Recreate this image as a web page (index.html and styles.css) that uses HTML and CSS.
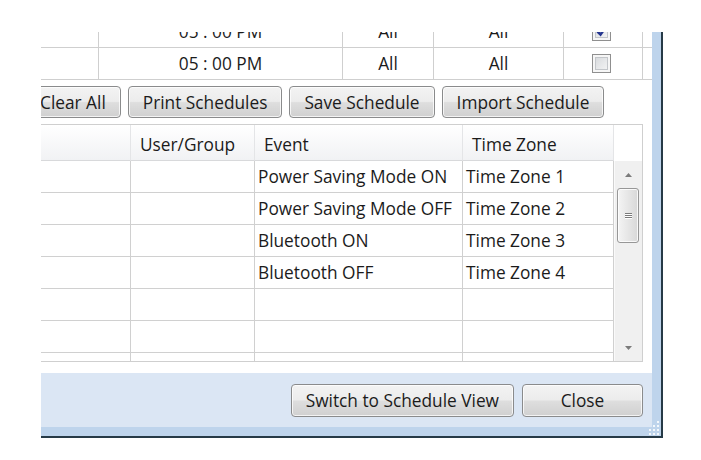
FILE: index.html
```html
<!DOCTYPE html>
<html lang="en">
<head>
    <meta charset="UTF-8">
    <meta name="viewport" content="width=device-width, initial-scale=1.0">
    <title>Schedule List</title>
    <link rel="stylesheet" href="styles.css">
</head>
<body>
    <div class="frame">
        <div class="client">

            <!-- Time slots -->
            <div class="slots">
                <div class="slot-row">
                    <div></div>
                    <div>05 : 00 PM</div>
                    <div>All</div>
                    <div>All</div>
                    <div><span class="check checked">
                        <svg viewBox="0 0 11 11" width="11" height="11"><path d="M1.5 5.5 L4.5 8.5 L9.5 1.5" fill="none" stroke="#24358f" stroke-width="2.6"/></svg>
                    </span></div>
                </div>
                <div class="slot-row">
                    <div></div>
                    <div>05 : 00 PM</div>
                    <div>All</div>
                    <div>All</div>
                    <div><span class="check"></span></div>
                </div>
            </div>

            <div class="toolbar">
                <button class="btn">Clear All</button>
                <button class="btn">Print Schedules</button>
                <button class="btn">Save Schedule</button>
                <button class="btn">Import Schedule</button>
            </div>

            <!-- Schedule grid -->
            <div class="grid">
                <div class="grid-head">
                    <div></div>
                    <div>User/Group</div>
                    <div>Event</div>
                    <div>Time Zone</div>
                    <div class="head-blank"></div>
                </div>
                <div class="grid-body">
                    <div class="rows">
                        <div class="row"><div></div><div></div><div>Power Saving Mode ON</div><div>Time Zone 1</div></div>
                        <div class="row"><div></div><div></div><div>Power Saving Mode OFF</div><div>Time Zone 2</div></div>
                        <div class="row"><div></div><div></div><div>Bluetooth ON</div><div>Time Zone 3</div></div>
                        <div class="row"><div></div><div></div><div>Bluetooth OFF</div><div>Time Zone 4</div></div>
                        <div class="row"><div></div><div></div><div></div><div></div></div>
                        <div class="row"><div></div><div></div><div></div><div></div></div>
                        <div class="row"><div></div><div></div><div></div><div></div></div>
                    </div>
                    <div class="vscroll">
                        <div class="arrow">
                            <svg viewBox="0 0 7 4" width="7" height="4"><path d="M0 4 L3.5 0 L7 4 Z" fill="#7b7b7b"/></svg>
                        </div>
                        <div class="thumb">
                            <span></span><span></span><span></span>
                        </div>
                        <div class="track"></div>
                        <div class="arrow">
                            <svg viewBox="0 0 7 4" width="7" height="4"><path d="M0 0 L7 0 L3.5 4 Z" fill="#7b7b7b"/></svg>
                        </div>
                    </div>
                </div>
            </div>

            <div class="footer">
                <button class="btn btn-tall">Switch to Schedule View</button>
                <button class="btn btn-tall btn-close">Close</button>
            </div>
        </div>

        <!-- size grip -->
        <svg class="grip" viewBox="0 0 14 17" width="14" height="17">
            <g fill="#f4f8fc">
                <rect x="11" y="2" width="2" height="2"/>
                <rect x="11" y="6" width="2" height="2"/>
                <rect x="11" y="10" width="2" height="2"/>
                <rect x="11" y="14" width="2" height="2"/>
                <rect x="7" y="6" width="2" height="2"/>
                <rect x="7" y="10" width="2" height="2"/>
                <rect x="7" y="14" width="2" height="2"/>
                <rect x="3" y="10" width="2" height="2"/>
                <rect x="3" y="14" width="2" height="2"/>
            </g>
        </svg>
    </div>
</body>
</html>
```

FILE: styles.css
```css
/* General Styles */
* {
    box-sizing: border-box;
}

body {
    margin: 0;
    background: #fff;
    font-family: "Open Sans", "Noto Sans", sans-serif;
    font-size: 17.3px;
    color: #1b1b1b;
}

/* Window frame */
.frame {
    position: relative;
    width: 622px;
    height: 406px;
    margin: 32px 0 0 41px;
    padding: 0 9px 9px 0;
    background: #bed4ec;
    border-right: 2px solid #263a47;
    border-bottom: 2px solid #263a47;
}

.client {
    height: 100%;
    background: #fff;
    display: flex;
    flex-direction: column;
    overflow: hidden;
}

/* Time slot rows */
.slots {
    margin-top: -16px;
}

.slot-row {
    display: grid;
    grid-template-columns: 58px 244px 91px 130px 79px;
    height: 32px;
    border-bottom: 1px solid #cfcfcf;
}

.slot-row > div {
    border-right: 1px solid #cfcfcf;
    display: flex;
    align-items: center;
    justify-content: center;
}

.check {
    width: 19px;
    height: 19px;
    margin-right: 3px;
    border: 1px solid #8f8f8f;
    background: linear-gradient(135deg, #d2d5d9, #f8f8f8);
    box-shadow: inset 0 0 0 2px #f6f6f6, inset 0 0 0 3px #c3c6ca;
    display: flex;
    align-items: center;
    justify-content: center;
}

/* Buttons */
.toolbar {
    display: flex;
    gap: 7px;
    margin: 6px 0 0 -16px;
}

.btn {
    height: 32px;
    padding: 0 14px;
    font: inherit;
    color: inherit;
    border: 1px solid #8a8b8c;
    border-radius: 4px;
    background: linear-gradient(#f3f3f3 0%, #ececec 48%, #dedede 52%, #d0d0d0 100%);
    box-shadow: inset 0 0 0 1px rgba(255, 255, 255, 0.75);
    white-space: nowrap;
}

.btn-tall {
    height: 33px;
}

.btn-close {
    width: 121px;
}

/* Schedule grid */
.grid {
    width: 602px;
    height: 238px;
    margin-top: 6px;
    border-top: 1px solid #cfcfcf;
    border-right: 1px solid #cfcfcf;
    border-bottom: 1px solid #cfcfcf;
    display: flex;
    flex-direction: column;
}

.grid-head {
    display: grid;
    grid-template-columns: 90px 124px 208px 151px 1fr;
    height: 36px;
    flex: none;
}

.grid-head > div {
    background: linear-gradient(#ffffff, #f1f2f4);
    border-right: 1px solid #e4e5e7;
    border-bottom: 1px solid #d8d9db;
    padding: 3px 0 0 9px;
    display: flex;
    align-items: center;
}

.grid-head > .head-blank {
    background: #fff;
    border: none;
}

.grid-body {
    flex: 1;
    display: flex;
    overflow: hidden;
}

.rows {
    width: 573px;
    flex: none;
}

.row {
    display: grid;
    grid-template-columns: 90px 124px 208px 151px;
    height: 32px;
    border-bottom: 1px solid #d0d0d0;
}

.row > div {
    border-right: 1px solid #d0d0d0;
    padding-left: 3px;
    display: flex;
    align-items: center;
    white-space: nowrap;
}

/* Vertical scrollbar */
.vscroll {
    flex: 1;
    display: flex;
    flex-direction: column;
    background: #f0f0f0;
    border-left: 1px solid #fafafa;
}

.arrow {
    height: 27px;
    display: flex;
    align-items: center;
    justify-content: center;
}

.thumb {
    height: 55px;
    margin: 0 3px 0 2px;
    border: 1px solid #979797;
    border-radius: 3px;
    background: linear-gradient(90deg, #f4f4f4, #e6e6e6 50%, #d8d8d8);
    box-shadow: inset 0 0 0 1px rgba(255, 255, 255, 0.8);
    display: flex;
    flex-direction: column;
    align-items: center;
    justify-content: center;
    gap: 1px;
}

.thumb span {
    width: 7px;
    height: 1px;
    background: #7a7a7a;
    box-shadow: 0 1px 0 #fff;
}

.track {
    flex: 1;
}

/* Footer */
.footer {
    margin-top: auto;
    height: 54px;
    flex: none;
    background: #dbe6f4;
    display: flex;
    justify-content: flex-end;
    align-items: center;
    gap: 8px;
    padding-right: 9px;
}

.grip {
    position: absolute;
    right: 1px;
    bottom: 0;
}
```
